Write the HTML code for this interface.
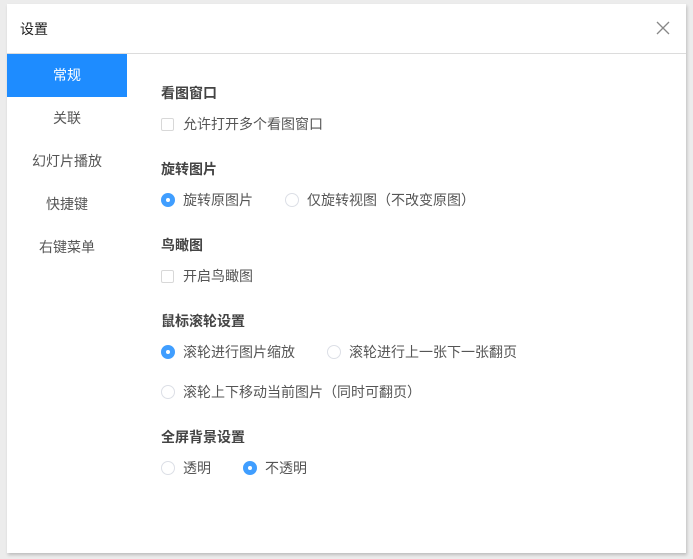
<!DOCTYPE html>
<html><head><meta charset="utf-8"><style>
*{margin:0;padding:0;box-sizing:border-box}
body{width:693px;height:559px;background:#ececec;font-family:"Liberation Sans","Noto Sans CJK SC",sans-serif;position:relative;overflow:hidden}
.dlg{position:absolute;left:7px;top:4px;width:679px;height:549px;background:#fff;box-shadow:1px 2px 3px rgba(0,0,0,.2)}
.hd{position:absolute;left:0;top:0;width:679px;height:50px;border-bottom:1px solid #dcdcdc}
.title{position:absolute;left:13px;top:15px;font-size:14px;color:#222}
.x{position:absolute;left:649px;top:17px}
.side{position:absolute;left:0;top:50px;width:120px}
.it{height:43px;line-height:43px;text-align:center;font-size:14px;color:#555}
.it.on{background:#1e8cff;color:#fff}
.a{position:absolute;font-size:14px;color:#555;white-space:nowrap}
.h{position:absolute;font-size:14px;font-weight:bold;color:#444;white-space:nowrap}
.cb{position:absolute;width:13px;height:13px;border:1px solid #d8d8d8;border-radius:2px}
.r{position:absolute;width:14px;height:14px;border:1px solid #dcdfe6;border-radius:50%}
.r.on{background:#409eff;border-color:#409eff}
.r.on::after{content:"";position:absolute;left:4px;top:4px;width:4px;height:4px;border-radius:50%;background:#fff}
</style></head><body>
<div class="dlg">
<div class="hd"><div class="title">设置</div>
<svg class="x" width="14" height="14" viewBox="0 0 14 14"><path d="M1 1L13 13M13 1L1 13" stroke="#888" stroke-width="1.3"/></svg></div>
<div class="side"><div class="it on">常规</div><div class="it">关联</div><div class="it">幻灯片播放</div><div class="it">快捷键</div><div class="it">右键菜单</div></div>
</div>
<div class="h" style="left:161px;top:83px">看图窗口</div>
<div class="cb" style="left:161px;top:118px"></div><div class="a" style="left:183px;top:114px">允许打开多个看图窗口</div>
<div class="h" style="left:161px;top:159px">旋转图片</div>
<div class="r on" style="left:161px;top:193px"></div><div class="a" style="left:183px;top:190px">旋转原图片</div>
<div class="r" style="left:285px;top:193px"></div><div class="a" style="left:307px;top:190px">仅旋转视图（不改变原图）</div>
<div class="h" style="left:161px;top:235px">鸟瞰图</div>
<div class="cb" style="left:161px;top:270px"></div><div class="a" style="left:183px;top:266px">开启鸟瞰图</div>
<div class="h" style="left:161px;top:311px">鼠标滚轮设置</div>
<div class="r on" style="left:161px;top:345px"></div><div class="a" style="left:183px;top:342px">滚轮进行图片缩放</div>
<div class="r" style="left:327px;top:345px"></div><div class="a" style="left:349px;top:342px">滚轮进行上一张下一张翻页</div>
<div class="r" style="left:161px;top:385px"></div><div class="a" style="left:183px;top:382px">滚轮上下移动当前图片（同时可翻页）</div>
<div class="h" style="left:161px;top:427px">全屏背景设置</div>
<div class="r" style="left:161px;top:461px"></div><div class="a" style="left:183px;top:458px">透明</div>
<div class="r on" style="left:243px;top:461px"></div><div class="a" style="left:265px;top:458px">不透明</div>
</body></html>
